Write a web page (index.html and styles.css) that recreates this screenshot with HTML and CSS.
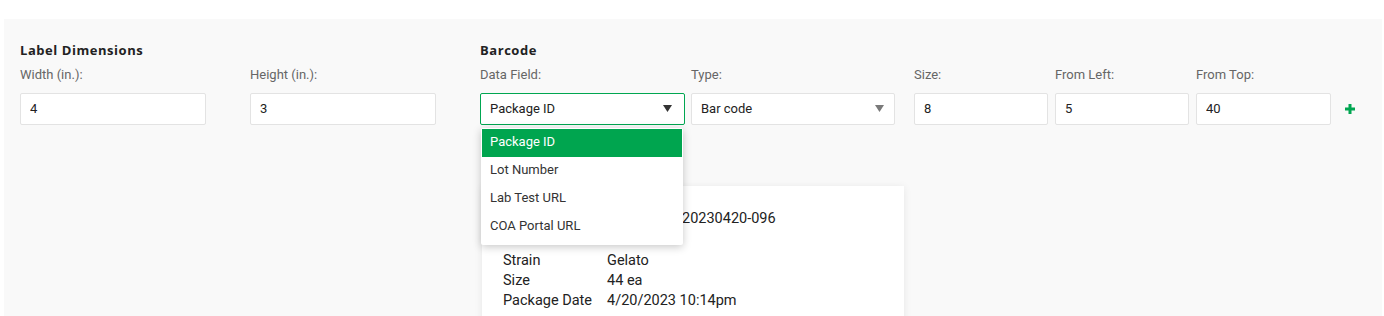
FILE: index.html
```html
<!DOCTYPE html>
<html lang="en">
  <head>
    <meta charset="UTF-8" />
    <meta name="viewport" content="width=device-width, initial-scale=1.0" />
    <title>Label Settings</title>
    <link rel="stylesheet" href="styles.css">
  </head>
  <body>
    <div class="settings-panel">
      <!-- Label size -->
      <section class="settings-section section-dimensions">
        <h3 class="section-title">Label Dimensions</h3>
        <div class="field-row">
          <div class="field field-dim">
            <label class="field-label">Width (in.):</label>
            <input class="field-input" type="text" value="4" readonly>
          </div>
          <div class="field field-dim">
            <label class="field-label">Height (in.):</label>
            <input class="field-input" type="text" value="3" readonly>
          </div>
        </div>
      </section>

      <!-- Barcode settings -->
      <section class="settings-section section-barcode">
        <h3 class="section-title">Barcode</h3>
        <div class="field-row barcode-row">
          <div class="field field-data">
            <label class="field-label">Data Field:</label>
            <div class="field-select is-open">
              <span>Package ID</span>
              <svg class="select-arrow" width="9" height="7" viewBox="0 0 9 7"><polygon points="0,0 9,0 4.5,7" fill="#333"/></svg>
            </div>
            <ul class="select-menu">
              <li class="select-option is-active">Package ID</li>
              <li class="select-option">Lot Number</li>
              <li class="select-option">Lab Test URL</li>
              <li class="select-option">COA Portal URL</li>
            </ul>
          </div>
          <div class="field field-type">
            <label class="field-label">Type:</label>
            <div class="field-select">
              <span>Bar code</span>
              <svg class="select-arrow" width="9" height="7" viewBox="0 0 9 7"><polygon points="0,0 9,0 4.5,7" fill="#7a7a7a"/></svg>
            </div>
          </div>
          <div class="field field-num field-size">
            <label class="field-label">Size:</label>
            <input class="field-input" type="text" value="8" readonly>
          </div>
          <div class="field field-num">
            <label class="field-label">From Left:</label>
            <input class="field-input" type="text" value="5" readonly>
          </div>
          <div class="field field-num">
            <label class="field-label">From Top:</label>
            <input class="field-input" type="text" value="40" readonly>
          </div>
          <button class="add-button" type="button" aria-label="Add">
            <svg width="10" height="10" viewBox="0 0 10 10"><path d="M5 0v10M0 5h10" stroke="#00a651" stroke-width="3"/></svg>
          </button>
        </div>

        <!-- Label preview (top rows sit under the open menu) -->
        <div class="label-preview">
          <div class="preview-row preview-id">
            <span class="preview-id-value">20230420-096</span>
          </div>
          <div class="preview-row">
            <span class="preview-key">Strain</span>
            <span class="preview-value">Gelato</span>
          </div>
          <div class="preview-row">
            <span class="preview-key">Size</span>
            <span class="preview-value">44 ea</span>
          </div>
          <div class="preview-row">
            <span class="preview-key">Package Date</span>
            <span class="preview-value">4/20/2023 10:14pm</span>
          </div>
        </div>
      </section>
    </div>
  </body>
</html>
```

FILE: styles.css
```css
* {
  margin: 0;
  padding: 0;
  box-sizing: border-box;
}

body {
  font-family: Roboto, "Liberation Sans", sans-serif;
  background: #ffffff;
  color: #333333;
  overflow: hidden;
  height: 316px;
}

.settings-panel {
  display: flex;
  margin: 19px 2px 0 4px;
  padding: 23px 16px 0 16px;
  height: 320px;
  background: #f9f9f9;
}

.settings-section {
  display: flex;
  flex-direction: column;
}

.section-dimensions {
  width: 460px;
}

.section-title {
  font-family: "Open Sans", sans-serif;
  font-size: 13px;
  font-weight: 700;
  letter-spacing: 0.55px;
  line-height: 16px;
  color: #222222;
  margin-bottom: 9px;
}

.field-row {
  display: flex;
  gap: 44px;
}

.field {
  position: relative;
  display: flex;
  flex-direction: column;
}

.field-label {
  font-size: 13px;
  line-height: 16px;
  color: #666666;
  margin-bottom: 10px;
}

.field-input,
.field-select {
  height: 32px;
  border: 1px solid #e3e3e3;
  border-radius: 2px;
  background: #ffffff;
  padding: 0 9px 2px 9px;
  font-family: Roboto, "Liberation Sans", sans-serif;
  font-size: 13px;
  color: #222222;
  outline: none;
}

.field-select {
  display: flex;
  align-items: center;
  justify-content: space-between;
  padding-right: 10px;
}

.field-select.is-open {
  border-color: #00a651;
  padding-right: 12px;
}

.field-dim {
  width: 186px;
}

/* Barcode row has uneven column gaps */
.barcode-row {
  gap: 0;
  align-items: flex-start;
}

.field-data {
  width: 205px;
  margin-right: 6px;
}

.field-type {
  width: 204px;
  margin-right: 19px;
}

.field-num {
  width: 134px;
  margin-right: 7px;
}

.field-num:last-of-type {
  width: 135px;
}

.add-button {
  align-self: flex-end;
  display: flex;
  align-items: center;
  height: 32px;
  margin-left: 7px;
  border: none;
  background: none;
}

/* Open dropdown for Data Field */
.select-menu {
  position: absolute;
  top: calc(100% + 3px);
  left: 1px;
  width: 202px;
  list-style: none;
  background: #ffffff;
  border-radius: 2px;
  box-shadow: 0 2px 8px rgba(0, 0, 0, 0.22);
  padding: 0 0 4px 0;
  z-index: 10;
}

.select-option {
  height: 28px;
  line-height: 25px;
  padding: 0 9px;
  font-size: 13px;
  color: #333333;
}

.select-option.is-active {
  background: #00a54f;
  color: #ffffff;
  margin: 1px 1px 0 1px;
  height: 28px;
  line-height: 26px;
  padding-left: 8px;
}

/* Label preview card */
.label-preview {
  width: 422px;
  margin: 61px 0 0 2px;
  padding: 23px 21px 0 21px;
  background: #ffffff;
  box-shadow: 0 1px 8px rgba(0, 0, 0, 0.08);
  flex: 1;
}

.preview-row {
  display: flex;
  font-size: 14.5px;
  line-height: 20px;
  color: #222222;
}

.preview-id {
  margin-bottom: 22px;
}

.preview-id-value {
  padding-left: 179px;
}

.preview-key {
  width: 104px;
  flex-shrink: 0;
}
```
